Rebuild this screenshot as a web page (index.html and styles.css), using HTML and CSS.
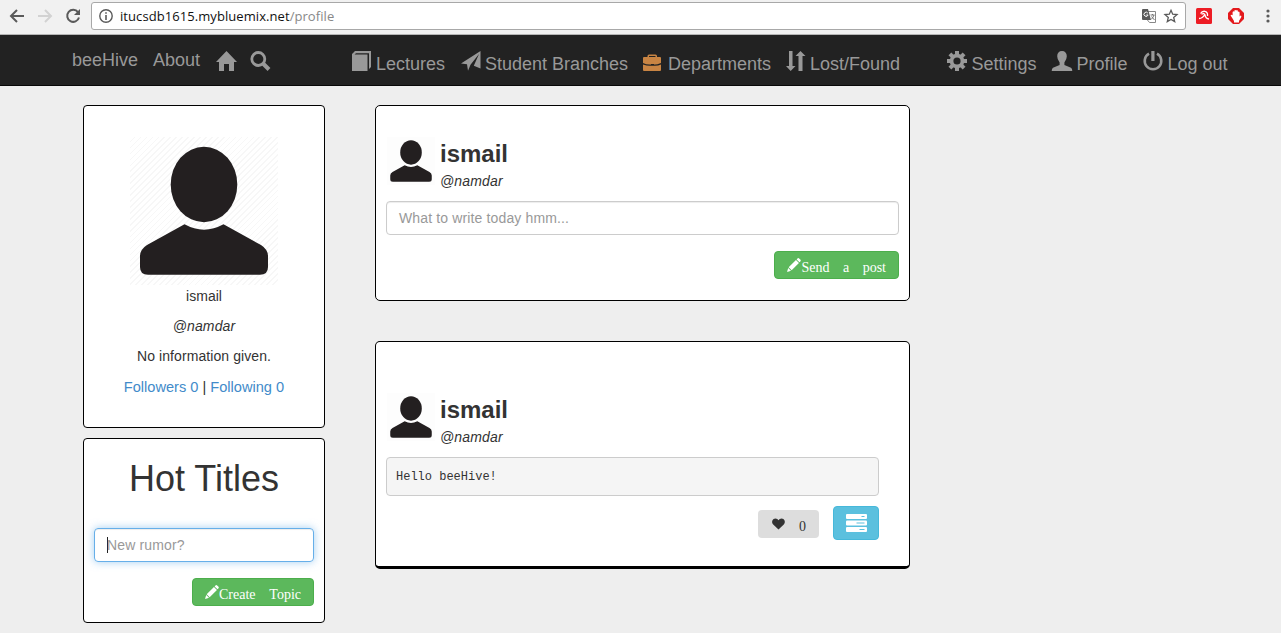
FILE: index.html
```
<!DOCTYPE html>
<html lang="en">
<head>
<meta charset="utf-8">
<title>beeHive</title>
<link rel="stylesheet" href="styles.css">
</head>
<body>
<svg class="defs" width="0" height="0">
  <defs>
    <symbol id="person" viewBox="0 0 148 148">
      <ellipse cx="74" cy="47.5" rx="33.3" ry="37.7"/>
      <path d="M54.5 87.3Q74 98 93.5 87.3L131 108Q138 112.500 138 119V130Q138 137.800 130 137.800H18Q10 137.800 10 130V119Q10 112.500 17 108Z"/>
    </symbol>
    <symbol id="pencil" viewBox="0 0 15 15">
      <path d="M10.300 1.500L11.500.3Q12.300-.2 13 .5L14.500 2Q15 2.700 14.500 3.400L13.400 4.600ZM9.600 2.100L12.800 5.300L5 13.100L1.800 9.900ZM1.300 10.600L4.300 13.600L0 14.900Z"/>
    </symbol>
  </defs>
</svg>
<header class="browser">
  <svg class="nav-icon" viewBox="0 0 16 16"><path d="M15 8H2M8 2L2 8L8 14" fill="none" stroke="#5a5a5a" stroke-width="2"/></svg>
  <svg class="nav-icon" viewBox="0 0 16 16"><path d="M1 8H14M8 2L14 8L8 14" fill="none" stroke="#d2d2d2" stroke-width="2"/></svg>
  <svg class="nav-icon" viewBox="0 0 16 16"><path d="M13 4.200A6 6 0 1 0 14 9.500" fill="none" stroke="#5a5a5a" stroke-width="2"/><path d="M15 1V7H9Z" fill="#5a5a5a"/></svg>
  <div class="address">
    <svg class="info" viewBox="0 0 14 14"><circle cx="7" cy="7" r="6.200" fill="none" stroke="#5a5a5a" stroke-width="1.400"/><path d="M6.200 3.200H7.800V4.800H6.200ZM6.200 6H7.800V11H6.200Z" fill="#5a5a5a"/></svg>
    <span class="url">itucsdb1615.mybluemix.net<span class="path">/profile</span></span>
    <svg class="translate" viewBox="0 0 14 14"><path d="M6 2.500H13.500V13.500H7.500L5 10.500" fill="#fff" stroke="#888"/><path d="M0 1Q0 0 1 0H6L9 11H1Q0 11 0 10Z" fill="#5a5a5a"/><path d="M5.800 4A2.100 2.100 0 1 0 6.100 6H4.300" fill="none" stroke="#fff"/><path d="M8.500 6H12.500M10.500 5V6M12 6Q11 9 9 10.500M9.500 7.500L12.500 11" fill="none" stroke="#777"/></svg>
    <svg class="star" viewBox="0 0 14 14"><path d="M7 1.300L8.700 5.200L13 5.600L9.700 8.400L10.700 12.600L7 10.400L3.300 12.600L4.300 8.400L1 5.600L5.300 5.200Z" fill="none" stroke="#5a5a5a" stroke-width="1.300"/></svg>
  </div>
  <svg class="ext" viewBox="0 0 16 16"><rect width="16" height="16" rx="1.500" fill="#ed1c24"/><path d="M4.500 5.500Q6 3 8.800 3.300Q12 3.800 11.500 8M8.800 6.500Q6.500 10.500 3 10.500M5.500 6.200Q8 4.800 9 6.800Q9.500 10.500 13 11" fill="none" stroke="#fff" stroke-width="1.300"/></svg>
  <svg class="ext hand" viewBox="0 0 16 16"><path d="M5 0H11L16 5V11L11 16H5L0 11V5Z" fill="#e3191c"/><path d="M4.200 10L2.600 7.500Q3 6 4.600 7.300V4Q5.500 2.700 6.400 3.700V2.500Q7.300 1.300 8.200 2.500Q9.200 1.500 9.900 3V4Q11 3 11.600 4.500V8.500L12.500 7.500Q14 7.700 13.200 9.300L11 13V14.500H6V13Z" fill="#fff"/></svg>
  <svg class="dots" viewBox="0 0 4 14"><circle cx="2" cy="2" r="1.600"/><circle cx="2" cy="7" r="1.600"/><circle cx="2" cy="12" r="1.600"/></svg>
</header>

<nav class="navbar">
  <div class="group primary">
    <a>beeHive</a><a>About</a>
    <svg class="glyph" viewBox="0 0 21 20"><path d="M10.500 0L21 11H18V20H13V13H8V20H3V11H0Z"/></svg>
    <svg class="glyph" viewBox="0 0 21 20"><circle cx="8.300" cy="8" r="6.500" fill="none" stroke="#999" stroke-width="2.800"/><path d="M13 12.500L19 18.500" stroke="#999" stroke-width="4"/></svg>
  </div>
  <div class="group sections">
    <a><svg class="glyph" viewBox="0 0 20 20"><path d="M0 3L3 0H19V16L17 18V2.200H4L2.500 3.500H15.500V20H0Z"/></svg><span>Lectures</span></a>
    <a><svg class="glyph" viewBox="0 0 20 20"><path d="M19.500 0V17.500L12.800 14.700L18 3L9.500 13.800L7 19.800L6 13.200L0 12.500Z"/></svg><span>Student Branches</span></a>
    <a><svg class="glyph brief" viewBox="0 0 20 20"><path d="M0 7Q0 6 1 6H4.500V5Q4.500 3.500 6 3.500H12.500Q14 3.500 14 5V6H17Q18 6 18 7V12Q13 14 11 13.500V13H8V13.500Q4 14 0 12ZM6 6H12.500V5H6ZM0 13.500Q4 15 8 14.800H11Q15 15 18 13.500V19Q18 20 17 20H1Q0 20 0 19Z" fill-rule="evenodd"/></svg><span>Departments</span></a>
    <a><svg class="glyph" viewBox="0 0 20 20"><path d="M3 0H6.500V15H9.500L4.700 20L0 15H3ZM12.500 20V5H9.500L14.500 0L19.500 5H16.500V20Z"/></svg><span>Lost/Found</span></a>
  </div>
  <div class="group account">
    <a><svg class="glyph" viewBox="0 0 20 20"><g><rect x="8" width="4" height="20"/><rect x="8" width="4" height="20" transform="rotate(45 10 10)"/><rect x="8" width="4" height="20" transform="rotate(90 10 10)"/><rect x="8" width="4" height="20" transform="rotate(135 10 10)"/><circle cx="10" cy="10" r="7.300"/></g><circle cx="10" cy="10" r="3.600" fill="#222"/></svg><span>Settings</span></a>
    <a><svg class="glyph" viewBox="0 0 20 20"><path d="M10 0C7 0 5.200 2 5.200 5.200Q5.200 8.500 7.600 11.500V14L1 16.800Q-.3 17.500-.3 20H20.300Q20.300 17.500 19 16.800L12.400 14V11.500Q14.800 8.500 14.800 5.200C14.800 2 13 0 10 0Z"/></svg><span>Profile</span></a>
    <a><svg class="glyph" viewBox="0 0 20 20"><path d="M6 2.700A8.300 8.300 0 1 0 14 2.700" fill="none" stroke="#999" stroke-width="2.600"/><rect x="8.300" width="3.200" height="10"/></svg><span>Log out</span></a>
  </div>
</nav>

<main class="layout">
  <aside class="side">
    <section class="card profile">
      <div class="portrait"><svg viewBox="0 0 148 148"><use href="#person"/></svg></div>
      <p>ismail</p>
      <p class="handle"><em>@namdar</em></p>
      <p class="bio">No information given.</p>
      <p class="follow"><a>Followers 0</a> | <a>Following 0</a></p>
    </section>
    <section class="card topics">
      <h1>Hot Titles</h1>
      <div class="field focused"><i class="caret"></i>New rumor?</div>
      <div class="actions"><button class="btn"><svg viewBox="0 0 15 15"><use href="#pencil"/></svg><span>Create Topic</span></button></div>
    </section>
  </aside>
  <div class="feed">
    <section class="card compose">
      <div class="author"><svg viewBox="0 0 148 148"><use href="#person"/></svg><div><h3>ismail</h3><em>@namdar</em></div></div>
      <div class="field message">What to write today hmm...</div>
      <div class="actions"><button class="btn send"><svg viewBox="0 0 15 15"><use href="#pencil"/></svg><span>Send a post</span></button></div>
    </section>
    <section class="card post">
      <div class="author"><svg viewBox="0 0 148 148"><use href="#person"/></svg><div><h3>ismail</h3><em>@namdar</em></div></div>
      <pre>Hello beeHive!</pre>
      <div class="reactions">
        <button class="like"><svg viewBox="0 0 14 12"><path d="M7 12L1.300 6.500C-1.300 3.500 .8 0 3.700 0Q6 0 7 2Q8 0 10.300 0C13.200 0 15.300 3.500 12.700 6.500Z"/></svg><span>0</span></button>
        <button class="detail"><svg viewBox="0 0 21 18"><g fill="#fff"><rect width="21" height="5" rx="1"/><rect y="6.500" width="21" height="5" rx="1"/><rect y="13" width="21" height="5" rx="1"/></g><path d="M15.500 2.500H18.500M10.500 9H18.500M13.500 15.500H18.500" stroke="#5bc0de" stroke-width="1.200"/></svg></button>
      </div>
    </section>
  </div>
</main>
</body>
</html>
```
FILE: styles.css
```
* { box-sizing: border-box; }
body { margin: 0; height: 633px; overflow: hidden; background: #eee; color: #333; font: 14px/20px "Liberation Sans", Arial, sans-serif; }
svg { display: block; flex: none; overflow: visible; fill: #231f20; }
.defs { position: absolute; }
p, h1, h3, pre { margin: 0; }
button { font: inherit; cursor: pointer; }

.browser { height: 35px; display: flex; align-items: center; padding: 0 10px 3px 9px; background: #f1f1f1; border-bottom: 1px solid #b5b5b5; }
.nav-icon { width: 16px; height: 16px; margin-right: 12px; }
.nav-icon:nth-child(3) { margin-right: 10px; }
.address { width: 1095px; height: 28px; display: flex; align-items: center; padding: 0 7px; background: #fff; border: 1px solid #a8a8a8; border-radius: 3px; }
.info { width: 14px; height: 14px; margin-right: 7px; }
.url { flex: 1; color: #111; font: 13px/18px "Open Sans", "Noto Sans", sans-serif; letter-spacing: .07px; }
.path { color: #888; }
.translate { width: 14px; height: 14px; margin-right: 8px; }
.star { width: 14px; height: 14px; }
.ext { width: 16px; height: 16px; margin-left: 10px; }
.hand { margin-left: 16px; }
.dots { width: 4px; height: 14px; margin-left: 22px; fill: #5a5a5a; }

.navbar { height: 51px; display: flex; padding-left: 72px; background: #222; border-bottom: 1px solid #080808; color: #999; font-size: 18px; }
.group { display: grid; align-content: start; }
.primary { grid-template-columns: 81px 63px 34px 21px; padding-top: 15px; }
.primary .glyph { width: 21px; height: 20px; margin-top: 1px; }
.sections { grid-template-columns: 109px 182px 143px 160px; margin-left: 81px; padding-top: 16px; }
.account { grid-template-columns: 105px 91px 100px; margin-left: .5px; padding-top: 16px; }
.group a { display: flex; white-space: nowrap; }
.group span { margin-top: 3px; }
.glyph { width: 20px; height: 20px; margin-right: 4px; fill: #999; }
.account .glyph { margin-right: 5px; }
.brief { fill: #c88443; margin-right: 5px; }

.layout { display: flex; align-items: flex-start; gap: 50px; padding: 19px 0 0 83px; }
.side { width: 242px; display: grid; gap: 10px; }
.feed { width: 535px; display: grid; gap: 40px; }
.card { background: #fff; border: 1px solid #000; border-radius: 4px; }
.profile { height: 323px; padding-top: 31px; display: flex; flex-direction: column; align-items: center; }
.profile p { margin-bottom: 10px; }
.handle, .author em { letter-spacing: .15px; }
.bio { letter-spacing: .08px; }
.portrait { width: 148px; height: 148px; margin-bottom: 1px; background: repeating-linear-gradient(135deg, #fff 0 3px, #f7f7f7 3px 4.200px); }
.profile .follow { margin-top: 1px; font-size: 14.600px; }
.follow a { color: #428bca; }
.topics { height: 185px; padding: 20px 10px 0; }
h1 { margin-bottom: 29px; text-align: center; font-size: 36px; font-weight: 500; line-height: 40px; }
.field { height: 34px; padding: 6px 12px; border: 1px solid #ccc; border-radius: 4px; color: #999; box-shadow: inset 0 1px 1px rgba(0,0,0,.075); }
.message { letter-spacing: .14px; }
.focused { border-color: #66afe9; letter-spacing: .14px; box-shadow: inset 0 1px 1px rgba(0,0,0,.075), 0 0 8px rgba(102,175,233,.6); }
.caret { float: left; width: 1px; height: 16px; margin: 2px -1px 0 0; background: #222; }
.actions { display: flex; justify-content: flex-end; margin-top: 16px; }
.btn { height: 28px; display: flex; padding: 6px 12px 0; border: 1px solid #4cae4c; border-radius: 4px; background: #5cb85c; color: #fff; font: 14px/20px "Liberation Serif", serif; word-spacing: 10.500px; }
.send { word-spacing: 10px; }
.btn svg { width: 14px; height: 14px; fill: #fff; }

.compose { height: 196px; padding: 31px 10px 0; border-radius: 5px; }
.post { height: 228px; padding: 51px 30px 0 10px; border-bottom-width: 3px; border-radius: 5px; }
.author { height: 64px; display: flex; gap: 5px; }
.author svg { width: 48px; height: 48px; margin-left: 1px; background: #fdfdfd; }
h3 { margin: 4px 0 4px; font-size: 24px; line-height: 26px; }
pre { height: 39px; padding: 10px 9px 8px; border: 1px solid #ccc; border-radius: 4px; background: #f5f5f5; font: 12px/19px "Liberation Mono", monospace; }
.reactions { display: flex; justify-content: flex-end; align-items: flex-start; gap: 14px; margin-top: 10px; }
.like { width: 61px; height: 28px; display: flex; margin-top: 4px; padding: 8px 13px 0 14px; justify-content: space-between; border: 0; border-radius: 4px; background: #ddd; color: #333; font: 14px/18px "Liberation Serif", serif; }
.like svg { width: 13px; height: 12px; fill: #333; }
.detail { width: 46px; height: 34px; padding: 7px 12px; border: 1px solid #46b8da; border-radius: 4px; background: #5bc0de; }
.detail svg { width: 21px; height: 18px; }
```
